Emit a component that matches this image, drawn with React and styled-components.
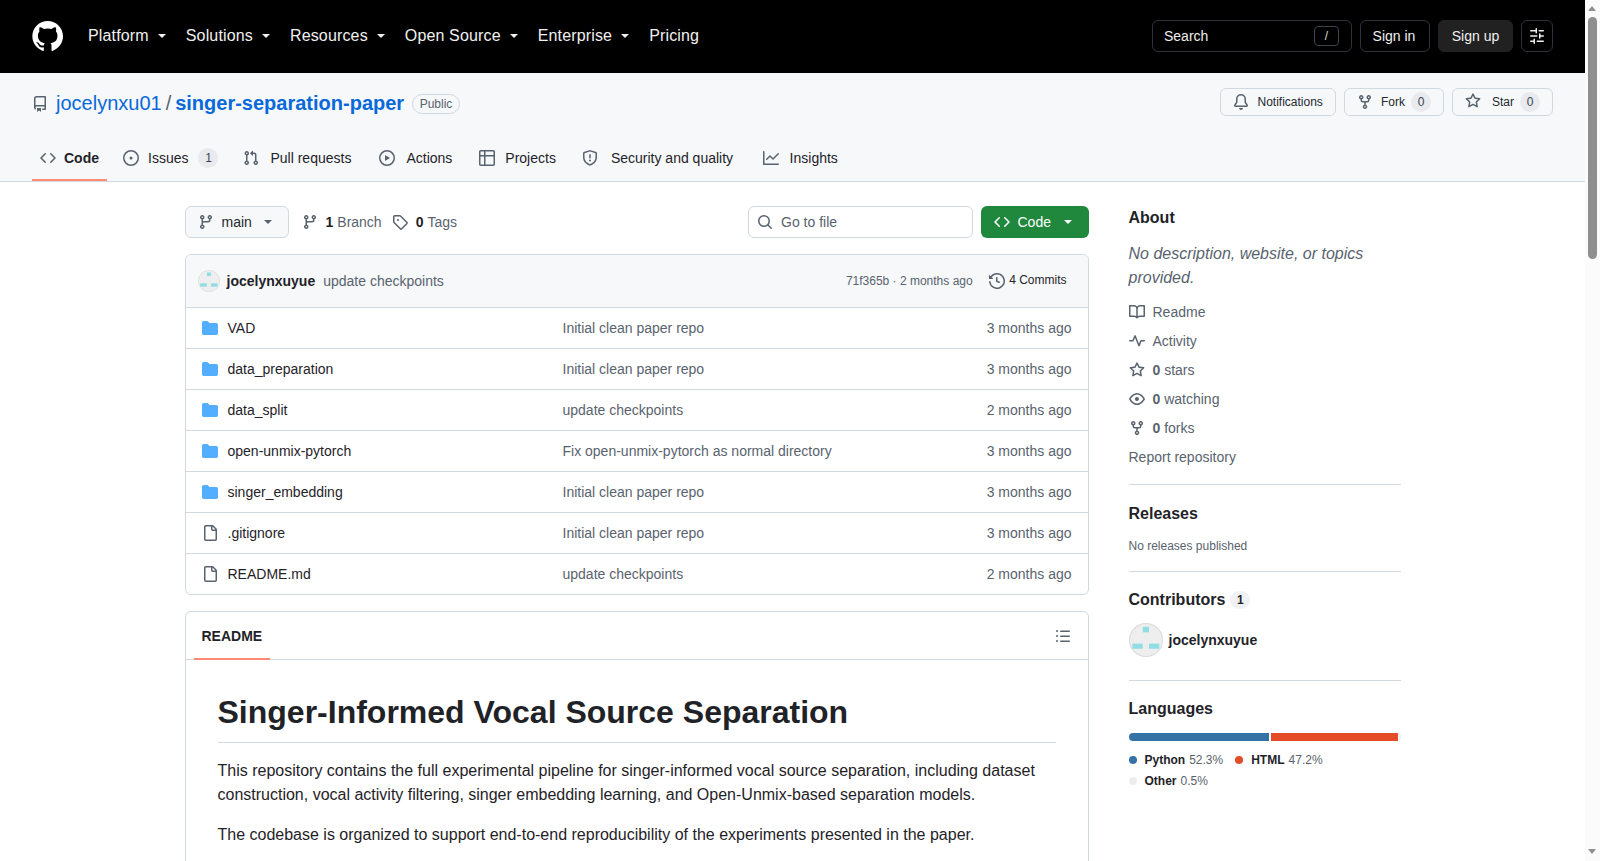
import React from "react";
import styled, { createGlobalStyle } from "styled-components";

const GlobalStyle = createGlobalStyle`
  html, body { margin: 0; padding: 0; height: 100%; overflow: hidden; background: #fff; }
  body { font-family: "Liberation Sans", Arial, sans-serif; font-size: 14px; color: #1f2328; }
  * { box-sizing: border-box; }
`;

const PATHS = {
  mark: "M12.5.75C6.146.75 1 5.896 1 12.25c0 5.089 3.292 9.387 7.863 10.91.575.101.79-.244.79-.546 0-.273-.014-1.178-.014-2.142-2.889.532-3.636-.704-3.866-1.35-.13-.331-.69-1.352-1.18-1.625-.402-.216-.977-.748-.014-.762.906-.014 1.553.834 1.769 1.179 1.035 1.74 2.688 1.25 3.349.948.1-.747.402-1.25.733-1.538-2.559-.287-5.232-1.279-5.232-5.678 0-1.25.445-2.285 1.178-3.09-.115-.288-.517-1.467.115-3.048 0 0 .963-.302 3.163 1.179.92-.259 1.897-.388 2.875-.388.977 0 1.955.13 2.875.388 2.2-1.495 3.162-1.179 3.162-1.179.633 1.581.23 2.76.115 3.048.733.805 1.179 1.825 1.179 3.09 0 4.413-2.688 5.39-5.247 5.678.417.36.776 1.05.776 2.128 0 1.538-.014 2.774-.014 3.162 0 .302.216.662.79.547C20.709 21.637 24 17.324 24 12.25 24 5.896 18.854.75 12.5.75Z",
  repo: "M2 2.5A2.5 2.5 0 0 1 4.5 0h8.75a.75.75 0 0 1 .75.75v12.5a.75.75 0 0 1-.75.75h-2.5a.75.75 0 0 1 0-1.5h1.75v-2h-8a1 1 0 0 0-.714 1.7.75.75 0 1 1-1.072 1.05A2.495 2.495 0 0 1 2 11.5Zm10.5-1h-8a1 1 0 0 0-1 1v6.708A2.486 2.486 0 0 1 4.5 9h8ZM5 12.25a.25.25 0 0 1 .25-.25h3.5a.25.25 0 0 1 .25.25v3.25a.25.25 0 0 1-.4.2l-1.45-1.087a.249.249 0 0 0-.3 0L5.4 15.7a.25.25 0 0 1-.4-.2Z",
  code: "M11.28 3.22l4.25 4.25a.75.75 0 0 1 0 1.06l-4.25 4.25a.749.749 0 0 1-1.275-.326.749.749 0 0 1 .215-.734L13.94 8l-3.72-3.72a.749.749 0 0 1 .326-1.275.749.749 0 0 1 .734.215Zm-6.56 0a.751.751 0 0 1 1.042.018.751.751 0 0 1 .018 1.042L2.06 8l3.72 3.72a.749.749 0 0 1-.326 1.275.749.749 0 0 1-.734-.215L.47 8.53a.75.75 0 0 1 0-1.06Z",
  issue: "M8 9.5a1.5 1.5 0 1 0 0-3 1.5 1.5 0 0 0 0 3Z M8 0a8 8 0 1 1 0 16A8 8 0 0 1 8 0ZM1.5 8a6.5 6.5 0 1 0 13 0 6.5 6.5 0 0 0-13 0Z",
  pull: "M1.5 3.25a2.25 2.25 0 1 1 3 2.122v5.256a2.251 2.251 0 1 1-1.5 0V5.372A2.25 2.25 0 0 1 1.5 3.25Zm5.677-.177L9.573.677A.25.25 0 0 1 10 .854V2.5h1A2.5 2.5 0 0 1 13.5 5v5.628a2.251 2.251 0 1 1-1.5 0V5a1 1 0 0 0-1-1h-1v1.646a.25.25 0 0 1-.427.177L7.177 3.427a.25.25 0 0 1 0-.354ZM3.75 2.5a.75.75 0 1 0 0 1.5.75.75 0 0 0 0-1.5Zm0 9.5a.75.75 0 1 0 0 1.5.75.75 0 0 0 0-1.5Zm8.25.75a.75.75 0 1 0 1.5 0 .75.75 0 0 0-1.5 0Z",
  play: "M8 0a8 8 0 1 1 0 16A8 8 0 0 1 8 0ZM1.5 8a6.5 6.5 0 1 0 13 0 6.5 6.5 0 0 0-13 0Zm4.879-2.773 4.264 2.559a.25.25 0 0 1 0 .428l-4.264 2.559A.25.25 0 0 1 6 10.559V5.442a.25.25 0 0 1 .379-.215Z",
  table: "M0 1.75C0 .784.784 0 1.75 0h12.5C15.216 0 16 .784 16 1.75v12.5A1.75 1.75 0 0 1 14.25 16H1.75A1.75 1.75 0 0 1 0 14.25ZM6.5 6.5v8h7.75a.25.25 0 0 0 .25-.25V6.5Zm8-1.5V1.75a.25.25 0 0 0-.25-.25H6.5V5Zm-13 1.5v7.75c0 .138.112.25.25.25H5v-8ZM5 5V1.5H1.75a.25.25 0 0 0-.25.25V5Z",
  shield: "M7.467.133a1.748 1.748 0 0 1 1.066 0l5.25 1.68A1.75 1.75 0 0 1 15 3.48V7c0 1.566-.32 3.182-1.303 4.682-.983 1.498-2.585 2.813-5.032 3.855a1.697 1.697 0 0 1-1.33 0c-2.447-1.042-4.049-2.357-5.032-3.855C1.32 10.182 1 8.566 1 7V3.48a1.75 1.75 0 0 1 1.217-1.667Zm.61 1.429a.25.25 0 0 0-.153 0l-5.25 1.68a.25.25 0 0 0-.174.238V7c0 1.358.275 2.666 1.057 3.86.784 1.194 2.121 2.34 4.366 3.297a.196.196 0 0 0 .154 0c2.245-.956 3.582-2.104 4.366-3.298C13.225 9.666 13.5 8.36 13.5 7V3.48a.251.251 0 0 0-.174-.237l-5.25-1.68ZM8.75 4.75v3a.75.75 0 0 1-1.5 0v-3a.75.75 0 0 1 1.5 0ZM9 10.5a1 1 0 1 1-2 0 1 1 0 0 1 2 0Z",
  graph: "M1.5 1.75V13.5h13.75a.75.75 0 0 1 0 1.5H.75a.75.75 0 0 1-.75-.75V1.75a.75.75 0 0 1 1.5 0Zm14.28 2.53-5.25 5.25a.75.75 0 0 1-1.06 0L7 7.06 4.28 9.78a.751.751 0 0 1-1.042-.018.751.751 0 0 1-.018-1.042l3.25-3.25a.75.75 0 0 1 1.06 0L10 7.94l4.72-4.72a.751.751 0 0 1 1.042.018.751.751 0 0 1 .018 1.042Z",
  bell: "M8 16a2 2 0 0 0 1.985-1.75c.017-.137-.097-.25-.235-.25h-3.5c-.138 0-.252.113-.235.25A2 2 0 0 0 8 16ZM3 5a5 5 0 0 1 10 0v2.947c0 .05.015.098.042.139l1.703 2.555A1.519 1.519 0 0 1 13.482 13H2.518a1.516 1.516 0 0 1-1.263-2.36l1.703-2.554A.255.255 0 0 0 3 7.947Zm5-3.5A3.5 3.5 0 0 0 4.5 5v2.947c0 .346-.102.683-.294.97l-1.703 2.556a.017.017 0 0 0-.003.01l.001.006c0 .002.002.004.004.006l.006.004.007.001h10.964l.007-.001.006-.004.004-.006.001-.007a.017.017 0 0 0-.003-.01l-1.703-2.554a1.745 1.745 0 0 1-.294-.97V5A3.5 3.5 0 0 0 8 1.5Z",
  fork: "M5 5.372v.878c0 .414.336.75.75.75h4.5a.75.75 0 0 0 .75-.75v-.878a2.25 2.25 0 1 1 1.5 0v.878a2.25 2.25 0 0 1-2.25 2.25h-1.5v2.128a2.251 2.251 0 1 1-1.5 0V8.5h-1.5A2.25 2.25 0 0 1 3.5 6.25v-.878a2.25 2.25 0 1 1 1.5 0ZM5 3.25a.75.75 0 1 0-1.5 0 .75.75 0 0 0 1.5 0Zm6.75.75a.75.75 0 1 0 0-1.5.75.75 0 0 0 0 1.5Zm-3 8.75a.75.75 0 1 0-1.5 0 .75.75 0 0 0 1.5 0Z",
  star: "M8 .25a.75.75 0 0 1 .673.418l1.882 3.815 4.21.612a.75.75 0 0 1 .416 1.279l-3.046 2.97.719 4.192a.751.751 0 0 1-1.088.791L8 12.347l-3.766 1.98a.75.75 0 0 1-1.088-.79l.72-4.194L.818 6.374a.75.75 0 0 1 .416-1.28l4.21-.611L7.327.668A.75.75 0 0 1 8 .25Zm0 2.445L6.615 5.5a.75.75 0 0 1-.564.41l-3.097.45 2.24 2.184a.75.75 0 0 1 .216.664l-.528 3.084 2.769-1.456a.75.75 0 0 1 .698 0l2.77 1.456-.53-3.084a.75.75 0 0 1 .216-.664l2.24-2.183-3.096-.45a.75.75 0 0 1-.564-.41L8 2.694Z",
  branch: "M9.5 3.25a2.25 2.25 0 1 1 3 2.122V6A2.5 2.5 0 0 1 10 8.5H6a1 1 0 0 0-1 1v1.128a2.251 2.251 0 1 1-1.5 0V5.372a2.25 2.25 0 1 1 1.5 0v1.836A2.493 2.493 0 0 1 6 7h4a1 1 0 0 0 1-1v-.628A2.25 2.25 0 0 1 9.5 3.25Zm-6 0a.75.75 0 1 0 1.5 0 .75.75 0 0 0-1.5 0Zm8.25-.75a.75.75 0 1 0 0 1.5.75.75 0 0 0 0-1.5ZM4.25 12a.75.75 0 1 0 0 1.5.75.75 0 0 0 0-1.5Z",
  tag: "M1 7.775V2.75C1 1.784 1.784 1 2.75 1h5.025c.464 0 .91.184 1.238.513l6.25 6.25a1.75 1.75 0 0 1 0 2.474l-5.026 5.026a1.75 1.75 0 0 1-2.474 0l-6.25-6.25A1.752 1.752 0 0 1 1 7.775Zm1.5 0c0 .066.026.13.073.177l6.25 6.25a.25.25 0 0 0 .354 0l5.025-5.025a.25.25 0 0 0 0-.354l-6.25-6.25a.25.25 0 0 0-.177-.073H2.75a.25.25 0 0 0-.25.25ZM6 5a1 1 0 1 1 0 2 1 1 0 0 1 0-2Z",
  search: "M10.68 11.74a6 6 0 0 1-7.922-8.982 6 6 0 0 1 8.982 7.922l3.04 3.04a.749.749 0 0 1-.326 1.275.749.749 0 0 1-.734-.215ZM11.5 7a4.499 4.499 0 1 0-8.997 0A4.499 4.499 0 0 0 11.5 7Z",
  history: "m.427 1.927 1.215 1.215a8.002 8.002 0 1 1-1.6 5.685.75.75 0 1 1 1.493-.154 6.5 6.5 0 1 0 1.18-4.458l1.358 1.358A.25.25 0 0 1 3.896 6H.25A.25.25 0 0 1 0 5.75V2.104a.25.25 0 0 1 .427-.177ZM7.75 4a.75.75 0 0 1 .75.75v2.992l2.028.812a.75.75 0 0 1-.557 1.392l-2.5-1A.751.751 0 0 1 7 8.25v-3.5A.75.75 0 0 1 7.75 4Z",
  folder: "M1.75 1A1.75 1.75 0 0 0 0 2.75v10.5C0 14.216.784 15 1.75 15h12.5A1.75 1.75 0 0 0 16 13.25v-8.5A1.75 1.75 0 0 0 14.25 3H7.5a.25.25 0 0 1-.2-.1l-.9-1.2C6.07 1.26 5.55 1 5 1H1.75Z",
  file: "M2 1.75C2 .784 2.784 0 3.75 0h6.586c.464 0 .909.184 1.237.513l2.914 2.914c.329.328.513.773.513 1.237v9.586A1.75 1.75 0 0 1 13.25 16h-9.5A1.75 1.75 0 0 1 2 14.25Zm1.75-.25a.25.25 0 0 0-.25.25v12.5c0 .138.112.25.25.25h9.5a.25.25 0 0 0 .25-.25V6h-2.75A1.75 1.75 0 0 1 9 4.25V1.5Zm6.75.062V4.25c0 .138.112.25.25.25h2.688l-.011-.013-2.914-2.914-.013-.011Z",
  list: "M5.75 2.5h8.5a.75.75 0 0 1 0 1.5h-8.5a.75.75 0 0 1 0-1.5Zm0 5h8.5a.75.75 0 0 1 0 1.5h-8.5a.75.75 0 0 1 0-1.5Zm0 5h8.5a.75.75 0 0 1 0 1.5h-8.5a.75.75 0 0 1 0-1.5ZM2 14a1 1 0 1 1 0-2 1 1 0 0 1 0 2Zm1-6a1 1 0 1 1-2 0 1 1 0 0 1 2 0ZM2 4a1 1 0 1 1 0-2 1 1 0 0 1 0 2Z",
  book: "M0 1.75A.75.75 0 0 1 .75 1h4.253c1.227 0 2.317.59 3 1.501A3.743 3.743 0 0 1 11.006 1h4.245a.75.75 0 0 1 .75.75v10.5a.75.75 0 0 1-.75.75h-4.507a2.25 2.25 0 0 0-1.591.659l-.622.621a.75.75 0 0 1-1.06 0l-.622-.621A2.25 2.25 0 0 0 5.258 13H.75a.75.75 0 0 1-.75-.75Zm7.251 10.324.004-5.073-.002-2.253A2.25 2.25 0 0 0 5.003 2.5H1.5v9h3.757a3.75 3.75 0 0 1 1.994.574ZM8.755 4.75l-.004 7.322a3.752 3.752 0 0 1 1.992-.572H14.5v-9h-3.495a2.25 2.25 0 0 0-2.25 2.25Z",
  pulse: "M6 2c.306 0 .582.187.696.471L10 10.731l1.304-3.26A.751.751 0 0 1 12 7h3.25a.75.75 0 0 1 0 1.5h-2.742l-1.812 4.528a.751.751 0 0 1-1.392 0L6 4.77 4.696 8.03A.75.75 0 0 1 4 8.5H.75a.75.75 0 0 1 0-1.5h2.742l1.812-4.529A.751.751 0 0 1 6 2Z",
  eye: "M8 2c1.981 0 3.671.992 4.933 2.078 1.27 1.091 2.187 2.345 2.637 3.023a1.62 1.62 0 0 1 0 1.798c-.45.678-1.367 1.932-2.637 3.023C11.67 13.008 9.981 14 8 14c-1.981 0-3.671-.992-4.933-2.078C1.797 10.83.88 9.576.43 8.898a1.62 1.62 0 0 1 0-1.798c.45-.677 1.367-1.931 2.637-3.022C4.33 2.992 6.019 2 8 2ZM1.679 7.932a.12.12 0 0 0 0 .136c.411.622 1.241 1.75 2.366 2.717C5.176 11.758 6.527 12.5 8 12.5c1.473 0 2.825-.742 3.955-1.715 1.124-.967 1.954-2.096 2.366-2.717a.12.12 0 0 0 0-.136c-.412-.621-1.242-1.75-2.366-2.717C10.824 4.242 9.473 3.5 8 3.5c-1.473 0-2.825.742-3.955 1.715-1.124.967-1.954 2.096-2.366 2.717ZM8 10a2 2 0 1 1-.001-3.999A2 2 0 0 1 8 10Z",
  sliders: "M15 2.75a.75.75 0 0 1-.75.75h-4a.75.75 0 0 1 0-1.5h4a.75.75 0 0 1 .75.75Zm-8.5.75v1.25a.75.75 0 0 0 1.5 0v-4a.75.75 0 0 0-1.5 0V2H1.75a.75.75 0 0 0 0 1.5H6.5Zm1.25 5.25a.75.75 0 0 0 0-1.5h-6a.75.75 0 0 0 0 1.5h6ZM15 8a.75.75 0 0 1-.75.75H11.5V10a.75.75 0 1 1-1.5 0V6a.75.75 0 0 1 1.5 0v1.25h2.75A.75.75 0 0 1 15 8Zm-9 5.25v-2a.75.75 0 0 0-1.5 0v1.25H1.75a.75.75 0 0 0 0 1.5H4.5v1.25a.75.75 0 0 0 1.5 0v-2Zm9 0a.75.75 0 0 1-.75.75h-6a.75.75 0 0 1 0-1.5h6a.75.75 0 0 1 .75.75Z",
};

const IconSvg = styled.svg`
  display: block;
  flex: none;
  width: ${(p) => p.$size}px;
  height: ${(p) => p.$size}px;
  fill: ${(p) => p.$color};
`;
const Icon = ({ name, size = 16, color = "#59636e" }) => (
  <IconSvg viewBox={name === "mark" ? "0 0 24 24" : "0 0 16 16"} $size={size} $color={color}>
    <path d={PATHS[name]} fillRule="evenodd" />
  </IconSvg>
);

const AvatarSvg = styled.svg`
  display: block;
  flex: none;
  width: ${(p) => p.$size}px;
  height: ${(p) => p.$size}px;
`;
const Identicon = ({ size }) => (
  <AvatarSvg viewBox="0 0 33 33" $size={size}>
    <circle cx="16.5" cy="16.5" r="16" fill="#eeeeee" stroke="#d8dadc" strokeWidth="1" />
    <rect x="13.4" y="3.7" width="6" height="5.4" fill="#90dde5" />
    <rect x="3.3" y="20" width="10" height="5" fill="#90dde5" />
    <rect x="19.4" y="20" width="10" height="5" fill="#90dde5" />
  </AvatarSvg>
);

const Shell = styled.div`
  display: flex;
  width: 1600px;
  height: 861px;
  overflow: hidden;
`;
const Page = styled.div`
  flex: none;
  width: 1585px;
  height: 861px;
  overflow: hidden;
`;
const ScrollTrack = styled.div`
  flex: none;
  width: 15px;
  height: 861px;
  background: #fbfbfb;
  padding: 6px 3px 7px;
  display: flex;
  flex-direction: column;
`;
const ScrollArrow = styled.div`
  flex: none;
  width: 0;
  height: 0;
  border-left: 4.5px solid transparent;
  border-right: 4.5px solid transparent;
  ${(p) => (p.$down ? "border-top: 5px solid #8f8f8f; margin-top: auto;" : "border-bottom: 5px solid #8f8f8f;")}
`;
const ScrollThumb = styled.div`
  flex: none;
  margin-top: 6px;
  width: 9px;
  height: 242px;
  border-radius: 5px;
  background: #8f8f8f;
`;

const TopBar = styled.header`
  height: 73px;
  background: #000;
  padding: 0 32px 1px;
  display: flex;
  align-items: center;
  color: #fff;
`;
const Logo = styled.div`
  flex: none;
  margin-left: -1px;
  margin-right: 25px;
`;
const NavList = styled.nav`
  display: flex;
  align-items: center;
  flex: 1;
`;
const NavItem = styled.span`
  display: flex;
  align-items: center;
  font-size: 16px;
  letter-spacing: 0.15px;
  margin-right: 20px;
  color: #f0f0f0;
`;
const Caret = styled.i`
  display: block;
  flex: none;
  width: 0;
  height: 0;
  margin-left: ${(p) => p.$gap ?? 9}px;
  border-left: 4px solid transparent;
  border-right: 4px solid transparent;
  border-top: 4px solid ${(p) => p.$color || "#f0f0f0"};
`;
const SearchBox = styled.div`
  width: 200px;
  height: 32px;
  border: 1px solid #2f3338;
  border-radius: 6px;
  display: flex;
  align-items: center;
  justify-content: space-between;
  padding: 0 12px 0 11px;
  font-size: 14px;
  color: #eee;
`;
const Kbd = styled.span`
  width: 25px;
  height: 20px;
  border: 1px solid #3d444d;
  border-radius: 4px;
  display: flex;
  align-items: center;
  justify-content: center;
  font-size: 12px;
  color: #ddd;
`;
const HeaderButton = styled.span`
  height: 32px;
  width: ${(p) => p.$width}px;
  margin-left: 8px;
  padding-right: ${(p) => p.$nudge || 0}px;
  border-radius: 6px;
  border: 1px solid ${(p) => (p.$filled ? "#212121" : "#2f3338")};
  background: ${(p) => (p.$filled ? "#212121" : "transparent")};
  display: flex;
  align-items: center;
  justify-content: center;
  font-size: 14px;
  color: #f0f0f0;
`;

const RepoHead = styled.section`
  height: 109px;
  background: #f6f8fa;
  border-bottom: 1px solid #d1d9e0;
  padding: 15px 32px 0;
`;
const TitleRow = styled.div`
  height: 28px;
  display: flex;
  align-items: center;
  justify-content: space-between;
`;
const RepoTitle = styled.div`
  display: flex;
  align-items: center;
  margin-top: 3px;
  font-size: 20px;
`;
const OwnerLink = styled.a`
  color: #0969da;
  margin-left: 8px;
`;
const Slash = styled.span`
  color: #59636e;
  margin: 0 4px;
`;
const RepoLink = styled.a`
  color: #0969da;
  font-weight: 700;
`;
const PublicPill = styled.span`
  height: 20px;
  margin-left: 8px;
  padding: 0 6.5px;
  border: 1px solid #d1d9e0;
  border-radius: 10px;
  display: flex;
  align-items: center;
  font-size: 12px;
  color: #59636e;
`;
const ActionGroup = styled.div`
  display: flex;
  gap: 8px;
`;
const ActionButton = styled.span`
  height: 28px;
  width: ${(p) => p.$width}px;
  padding-left: 12px;
  border: 1px solid #d1d9e0;
  border-radius: 6px;
  background: #f6f8fa;
  display: flex;
  align-items: center;
  font-size: 12px;
  color: #25292e;
`;
const ActionLabel = styled.span`
  margin-left: ${(p) => p.$gap}px;
`;
const RaisedIcon = styled.span`
  display: block;
  margin-top: -2px;
`;
const Counter = styled.span`
  min-width: 20px;
  height: ${(p) => p.$height || 20}px;
  margin-left: ${(p) => p.$gap ?? 6}px;
  padding: 0 6px;
  border-radius: 10px;
  background: rgba(129, 139, 152, 0.12);
  display: flex;
  align-items: center;
  justify-content: center;
  font-size: 12px;
  font-weight: ${(p) => (p.$bold ? 700 : 400)};
  color: ${(p) => (p.$dark ? "#1f2328" : "#3d444d")};
`;
const TabBar = styled.nav`
  margin-top: 20px;
  height: 45px;
  display: flex;
  gap: 8px;
`;
const Tab = styled.a`
  height: 45px;
  margin-left: ${(p) => p.$extra || 0}px;
  padding: 0 8px;
  display: flex;
  align-items: center;
  gap: ${(p) => p.$gap || 8}px;
  border-bottom: 2px solid ${(p) => (p.$active ? "#fd8c73" : "transparent")};
  font-size: 14px;
  font-weight: ${(p) => (p.$active ? 700 : 400)};
  color: #1f2328;
`;

const Main = styled.main`
  width: 1280px;
  margin: 0 auto;
  padding: 24px 32px 0;
  display: flex;
  gap: 40px;
  align-items: flex-start;
`;
const Column = styled.div`
  width: 904px;
  flex: none;
`;
const Toolbar = styled.div`
  height: 32px;
  display: flex;
  align-items: center;
`;
const BranchButton = styled.span`
  width: 104px;
  height: 32px;
  padding-left: 12px;
  border: 1px solid #d1d9e0;
  border-radius: 6px;
  background: #f6f8fa;
  display: flex;
  align-items: center;
  color: #25292e;
`;
const BranchName = styled.span`
  margin-left: 8px;
`;
const RefLink = styled.span`
  display: flex;
  align-items: center;
  margin-left: ${(p) => p.$gap}px;
  color: #59636e;
`;
const RefCount = styled.b`
  margin-left: 8px;
  margin-right: 4px;
  color: #1f2328;
`;
const GoToFile = styled.div`
  margin-left: auto;
  width: 224.5px;
  height: 32px;
  padding-left: 8px;
  border: 1px solid #d1d9e0;
  border-radius: 6px;
  background: #fff;
  display: flex;
  align-items: center;
  gap: 8px;
  color: #59636e;
`;
const CodeButton = styled.span`
  width: 108px;
  height: 32px;
  margin-left: 8px;
  padding-left: 13px;
  border-radius: 6px;
  background: #1f883d;
  display: flex;
  align-items: center;
  color: #fff;
`;
const CodeLabel = styled.span`
  margin-left: 8px;
`;
const FileBox = styled.div`
  margin-top: 16px;
  border: 1px solid #d1d9e0;
  border-radius: 6px;
  overflow: hidden;
`;
const CommitHead = styled.div`
  height: 52px;
  background: #f6f8fa;
  padding: 0 21px 0 12px;
  display: flex;
  align-items: center;
`;
const CommitAuthor = styled.b`
  margin-left: 7px;
`;
const CommitMessage = styled.span`
  margin-left: 8px;
  color: #59636e;
`;
const CommitMeta = styled.span`
  margin-left: auto;
  font-size: 12px;
  color: #59636e;
`;
const CommitsLink = styled.span`
  margin-left: 16.5px;
  display: flex;
  align-items: center;
  gap: 4px;
  font-size: 12px;
  color: #1f2328;
`;
const CommitsLabel = styled.span`
  padding-bottom: 2px;
`;
const FileRow = styled.div`
  height: 41px;
  border-top: 1px solid #d1d9e0;
  padding: 0 16px;
  display: grid;
  grid-template-columns: 361px 1fr auto;
  align-items: center;
`;
const FileName = styled.span`
  display: flex;
  align-items: center;
  gap: 10px;
  color: #1f2328;
`;
const FileMuted = styled.span`
  color: #59636e;
`;
const ReadmeBox = styled.div`
  margin-top: 16px;
  border: 1px solid #d1d9e0;
  border-radius: 6px;
`;
const ReadmeHead = styled.div`
  height: 48px;
  border-bottom: 1px solid #d1d9e0;
  padding: 0 17px 0 8px;
  display: flex;
  align-items: flex-start;
  justify-content: space-between;
`;
const ReadmeTab = styled.span`
  height: 48px;
  padding: 0 8px;
  border-top: 2px solid transparent;
  border-bottom: 2px solid #fd8c73;
  display: flex;
  align-items: center;
  font-weight: 700;
`;
const ListButton = styled.span`
  height: 47px;
  display: flex;
  align-items: center;
`;
const Article = styled.article`
  padding: 32px;
`;
const Title = styled.h1`
  margin: 0 0 16px;
  padding-bottom: 9.6px;
  border-bottom: 1px solid #d1d9e0;
  font-size: 32px;
  line-height: 40px;
  font-weight: 700;
`;
const Para = styled.p`
  margin: 0 0 16px;
  font-size: 16px;
  line-height: 24px;
  color: #1f2328;
`;

const Side = styled.aside`
  width: 272px;
  flex: none;
`;
const SideSection = styled.section`
  padding: ${(p) => p.$top ?? 16}px 0 ${(p) => p.$bottom ?? 16}px;
  border-bottom: ${(p) => (p.$last ? "none" : "1px solid #d1d9e0")};
  &:first-child { padding-top: 0; }
`;
const SideHeading = styled.h2`
  margin: 2px 0 0;
  font-size: 16px;
  line-height: 20px;
  font-weight: 700;
  display: flex;
  align-items: center;
`;
const AboutText = styled.p`
  margin: 14px 0 7px;
  font-size: 16px;
  line-height: 24px;
  font-style: italic;
  color: #59636e;
`;
const SideRow = styled.div`
  height: 29px;
  display: flex;
  align-items: center;
  gap: 8px;
  color: #59636e;
`;
const SideRowText = styled.span`
  color: #59636e;
`;
const SmallNote = styled.p`
  margin: 13px 0 0;
  font-size: 12px;
  line-height: 18px;
  color: #59636e;
`;
const ContributorRow = styled.div`
  margin-top: 13px;
  display: flex;
  align-items: center;
  gap: 6px;
  font-weight: 700;
`;
const LangBar = styled.div`
  margin-top: 14px;
  height: 8px;
  border-radius: 6px;
  overflow: hidden;
  display: flex;
  gap: 1.5px;
  background: #fff;
`;
const LangSegment = styled.span`
  display: block;
  background: ${(p) => p.$color};
`;
const Legend = styled.div`
  margin-top: 10px;
`;
const LegendRow = styled.div`
  display: flex;
  gap: 12px;
  & + & { margin-top: 2.7px; }
`;
const LegendItem = styled.span`
  height: 18px;
  display: flex;
  align-items: center;
  font-size: 12px;
  color: #59636e;
`;
const LegendDot = styled.i`
  width: 8px;
  height: 8px;
  border-radius: 50%;
  margin-right: 8px;
  background: ${(p) => p.$color};
`;
const LegendName = styled.b`
  margin-right: 4px;
  color: #1f2328;
`;

const NAV = ["Platform", "Solutions", "Resources", "Open Source", "Enterprise"];
const TABS = [
  { icon: "code", label: "Code", active: true },
  { icon: "issue", label: "Issues", count: 1, gap: 9 },
  { icon: "pull", label: "Pull requests", extra: 1, gap: 11 },
  { icon: "play", label: "Actions", extra: 4, gap: 11 },
  { icon: "table", label: "Projects", extra: 3, gap: 10 },
  { icon: "shield", label: "Security and quality", extra: 2, gap: 13 },
  { icon: "graph", label: "Insights", extra: 6, gap: 10.5 },
];
const FILES = [
  ["folder", "VAD", "Initial clean paper repo", "3 months ago"],
  ["folder", "data_preparation", "Initial clean paper repo", "3 months ago"],
  ["folder", "data_split", "update checkpoints", "2 months ago"],
  ["folder", "open-unmix-pytorch", "Fix open-unmix-pytorch as normal directory", "3 months ago"],
  ["folder", "singer_embedding", "Initial clean paper repo", "3 months ago"],
  ["file", ".gitignore", "Initial clean paper repo", "3 months ago"],
  ["file", "README.md", "update checkpoints", "2 months ago"],
];

export default function App() {
  return (
    <Shell>
      <GlobalStyle />
      <Page>
        <TopBar>
          <Logo><Icon name="mark" size={32} color="#fff" /></Logo>
          <NavList>
            {NAV.map((n) => (
              <NavItem key={n}>{n}<Caret /></NavItem>
            ))}
            <NavItem>Pricing</NavItem>
          </NavList>
          <SearchBox>Search<Kbd>/</Kbd></SearchBox>
          <HeaderButton $width={70} $nudge={2}>Sign in</HeaderButton>
          <HeaderButton $width={75} $filled>Sign up</HeaderButton>
          <HeaderButton $width={32}><Icon name="sliders" color="#f0f0f0" /></HeaderButton>
        </TopBar>

        <RepoHead>
          <TitleRow>
            <RepoTitle>
              <Icon name="repo" />
              <OwnerLink>jocelynxu01</OwnerLink>
              <Slash>/</Slash>
              <RepoLink>singer-separation-paper</RepoLink>
              <PublicPill>Public</PublicPill>
            </RepoTitle>
            <ActionGroup>
              <ActionButton $width={116.5}>
                <Icon name="bell" /><ActionLabel $gap={9}>Notifications</ActionLabel>
              </ActionButton>
              <ActionButton $width={100}>
                <Icon name="fork" /><ActionLabel $gap={8}>Fork</ActionLabel><Counter>0</Counter>
              </ActionButton>
              <ActionButton $width={101}>
                <RaisedIcon><Icon name="star" /></RaisedIcon><ActionLabel $gap={11}>Star</ActionLabel><Counter>0</Counter>
              </ActionButton>
            </ActionGroup>
          </TitleRow>
          <TabBar>
            {TABS.map((t) => (
              <Tab key={t.label} $active={t.active} $gap={t.gap} $extra={t.extra}>
                <Icon name={t.icon} />
                {t.label}
                {t.count ? <Counter $gap={1}>{t.count}</Counter> : null}
              </Tab>
            ))}
          </TabBar>
        </RepoHead>

        <Main>
          <Column>
            <Toolbar>
              <BranchButton>
                <Icon name="branch" />
                <BranchName>main</BranchName>
                <Caret $gap={12} $color="#59636e" />
              </BranchButton>
              <RefLink $gap={13}><Icon name="branch" /><RefCount>1</RefCount>Branch</RefLink>
              <RefLink $gap={10}><Icon name="tag" /><RefCount>0</RefCount>Tags</RefLink>
              <GoToFile><Icon name="search" />Go to file</GoToFile>
              <CodeButton>
                <Icon name="code" color="#fff" />
                <CodeLabel>Code</CodeLabel>
                <Caret $gap={13} $color="#fff" />
              </CodeButton>
            </Toolbar>

            <FileBox>
              <CommitHead>
                <Identicon size={22} />
                <CommitAuthor>jocelynxuyue</CommitAuthor>
                <CommitMessage>update checkpoints</CommitMessage>
                <CommitMeta>71f365b · 2 months ago</CommitMeta>
                <CommitsLink><Icon name="history" /><CommitsLabel>4 Commits</CommitsLabel></CommitsLink>
              </CommitHead>
              {FILES.map(([icon, name, msg, date]) => (
                <FileRow key={name}>
                  <FileName>
                    <Icon name={icon} color={icon === "folder" ? "#54aeff" : "#59636e"} />
                    {name}
                  </FileName>
                  <FileMuted>{msg}</FileMuted>
                  <FileMuted>{date}</FileMuted>
                </FileRow>
              ))}
            </FileBox>

            <ReadmeBox>
              <ReadmeHead>
                <ReadmeTab>README</ReadmeTab>
                <ListButton><Icon name="list" /></ListButton>
              </ReadmeHead>
              <Article>
                <Title>Singer-Informed Vocal Source Separation</Title>
                <Para>
                  This repository contains the full experimental pipeline for singer-informed vocal source separation, including dataset construction, vocal activity filtering, singer embedding learning, and Open-Unmix-based separation models.
                </Para>
                <Para>
                  The codebase is organized to support end-to-end reproducibility of the experiments presented in the paper.
                </Para>
              </Article>
            </ReadmeBox>
          </Column>

          <Side>
            <SideSection $bottom={13}>
              <SideHeading>About</SideHeading>
              <AboutText>No description, website, or topics provided.</AboutText>
              <SideRow><Icon name="book" /><SideRowText>Readme</SideRowText></SideRow>
              <SideRow><Icon name="pulse" /><SideRowText>Activity</SideRowText></SideRow>
              <SideRow><Icon name="star" /><SideRowText><b>0</b> stars</SideRowText></SideRow>
              <SideRow><Icon name="eye" /><SideRowText><b>0</b> watching</SideRowText></SideRow>
              <SideRow><Icon name="fork" /><SideRowText><b>0</b> forks</SideRowText></SideRow>
              <SideRow><SideRowText>Report repository</SideRowText></SideRow>
            </SideSection>
            <SideSection $top={17}>
              <SideHeading>Releases</SideHeading>
              <SmallNote>No releases published</SmallNote>
            </SideSection>
            <SideSection $bottom={23}>
              <SideHeading>Contributors<Counter $gap={5} $height={18} $bold $dark>1</Counter></SideHeading>
              <ContributorRow><Identicon size={34} />jocelynxuyue</ContributorRow>
            </SideSection>
            <SideSection $last>
              <SideHeading>Languages</SideHeading>
              <LangBar>
                <LangSegment $color="#3572a5" style={{ width: "51.75%" }} />
                <LangSegment $color="#e34c26" style={{ width: "46.6%" }} />
                <LangSegment $color="#ededed" style={{ flex: 1 }} />
              </LangBar>
              <Legend>
                <LegendRow>
                  <LegendItem><LegendDot $color="#3572a5" /><LegendName>Python</LegendName>52.3%</LegendItem>
                  <LegendItem><LegendDot $color="#e34c26" /><LegendName>HTML</LegendName>47.2%</LegendItem>
                </LegendRow>
                <LegendRow>
                  <LegendItem><LegendDot $color="#ededed" /><LegendName>Other</LegendName>0.5%</LegendItem>
                </LegendRow>
              </Legend>
            </SideSection>
          </Side>
        </Main>
      </Page>
      <ScrollTrack>
        <ScrollArrow />
        <ScrollThumb />
        <ScrollArrow $down />
      </ScrollTrack>
    </Shell>
  );
}
